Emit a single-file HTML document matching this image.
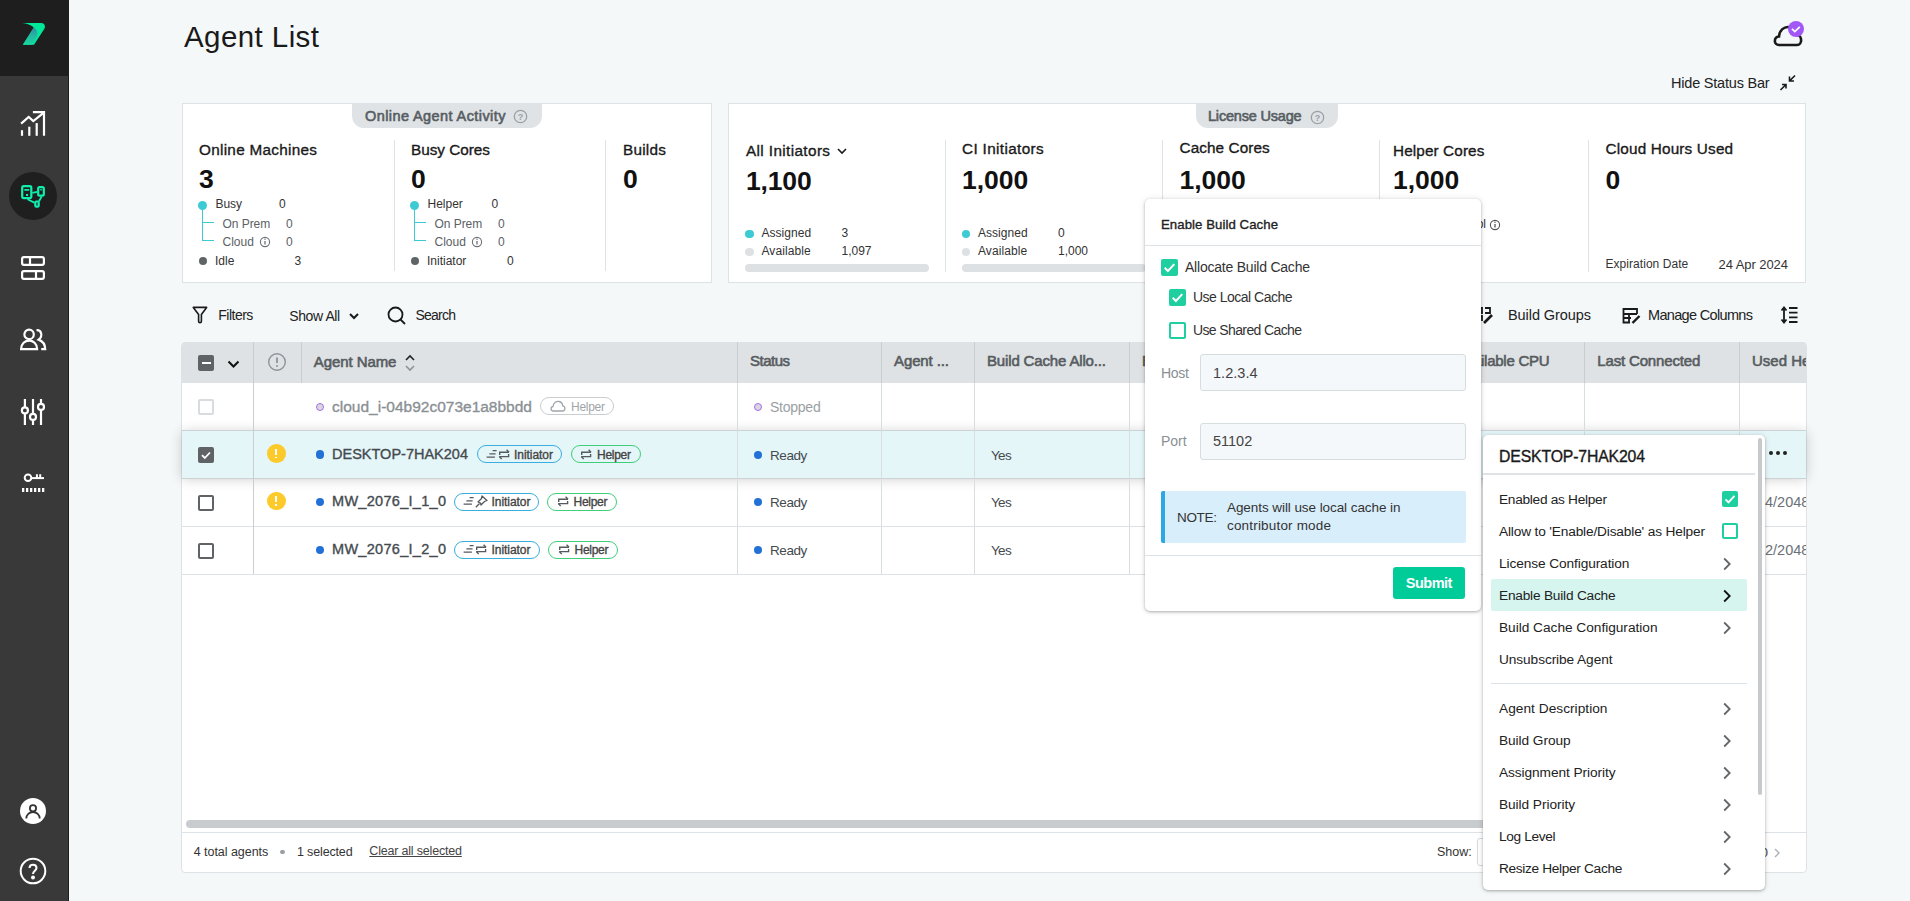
<!DOCTYPE html>
<html><head><meta charset="utf-8"><style>
html,body{margin:0;padding:0;}
body{width:1910px;height:901px;overflow:hidden;position:relative;background:#f4f8f9;font-family:"Liberation Sans",sans-serif;}
.t{position:absolute;white-space:nowrap;}
.r{position:absolute;}
svg.r{overflow:visible;}
</style></head><body>
<div class="r" style="left:0px;top:0px;width:68px;height:901px;background:#393939;"></div>
<div class="r" style="left:68px;top:0px;width:1px;height:901px;background:#1d1d1d;"></div>
<div class="r" style="left:0px;top:0px;width:68px;height:76px;background:#1e1e1e;"></div>
<svg class="r" style="left:0;top:0" width="68" height="76" viewBox="0 0 68 76">
<defs><linearGradient id="lg2" x1="0" y1="0" x2="0" y2="1"><stop offset="0" stop-color="#3a86a8"/><stop offset="0.45" stop-color="#24b4a2"/><stop offset="1" stop-color="#18d89e"/></linearGradient></defs>
<path d="M22.2,23 L41.5,23 Q45.8,23.6 44.7,28.3 L34,44.8 L22.9,44.8 L33.8,27.6 Q29.5,23.6 22.2,23 Z" fill="#00e89a"/>
<path d="M33.8,27.6 Q38.8,31.5 36.8,37 L32.2,44.8 L22.9,44.8 Z" fill="url(#lg2)"/>
</svg>
<svg class="r" style="left:18px;top:108px" width="30" height="30" viewBox="0 0 30 30" fill="none" stroke="#fff" stroke-width="2.2">
<path d="M3.1,15.6 L10.7,9 L15.3,13 L25.2,5.2"/><path d="M14.9,4.2 L26,4.2 L26,27.8"/>
<path d="M4,22.2 V27.8"/><path d="M11.3,18.7 V27.8"/><path d="M18.7,15.1 V27.8"/></svg>
<div class="r" style="left:9px;top:172px;width:48px;height:48px;background:#1f1f1f;border-radius:50%;"></div>
<svg class="r" style="left:19px;top:183px" width="28" height="28" viewBox="0 0 28 28" fill="none" stroke="#0ff0ae" stroke-width="2.2">
<rect x="3.2" y="3.2" width="9.1" height="12" rx="1.6"/><path d="M5.3,6.9 H10.2" stroke-width="1.7"/><rect x="7" y="11" width="2.1" height="2" fill="#0ff0ae" stroke="none"/>
<rect x="19.2" y="4.1" width="5.6" height="8.5" rx="1.4"/><path d="M21.3,6.8 H22.8" stroke-width="1.4"/><rect x="16.3" y="18.5" width="3.4" height="5.2" rx="1.1"/>
<path d="M13.3,9.8 L18.1,8.9" stroke-width="1.8"/><path d="M8.5,16.3 L15.3,19.6" stroke-width="1.8"/><path d="M22.6,13.6 L20,18.3" stroke-width="1.8"/></svg>
<svg class="r" style="left:19px;top:254px" width="28" height="28" viewBox="0 0 28 28" fill="none" stroke="#fff" stroke-width="2.2">
<rect x="3.1" y="3.1" width="21.8" height="7.7" rx="1.8"/><rect x="3.1" y="17.1" width="21.8" height="7.8" rx="1.8"/>
<path d="M11,3 V11"/><path d="M17,17 V25"/></svg>
<svg class="r" style="left:18px;top:326px" width="30" height="28" viewBox="0 0 30 28" fill="none" stroke="#fff" stroke-width="2.2">
<circle cx="11.1" cy="8.4" r="4.7"/><path d="M3.1,23.1 C3.1,11.8 19.1,11.8 19.1,23.1 Z"/>
<path d="M18.5,4.2 C23.5,3.8 25.2,10.2 20.6,13.6 C25,15.3 27.2,18.5 27.2,23.1 H23.2"/></svg>
<svg class="r" style="left:18px;top:397px" width="30" height="30" viewBox="0 0 30 30" fill="none" stroke="#fff" stroke-width="2.2">
<path d="M6.9,2 V10.4 M6.9,16.4 V28"/><circle cx="6.9" cy="13.4" r="3"/>
<path d="M15,2 V16.9 M15,22.9 V28"/><circle cx="15" cy="19.9" r="3"/>
<path d="M23,2 V6.9 M23,12.9 V28"/><circle cx="23" cy="9.9" r="3"/></svg>
<svg class="r" style="left:19px;top:471px" width="28" height="24" viewBox="0 0 28 24" fill="none" stroke="#fff" stroke-width="2.2">
<circle cx="9" cy="6.8" r="3.3" stroke-width="2"/><path d="M12.3,7.1 H25" stroke-width="2"/><path d="M17.9,3.2 V7 M21.2,3.2 V7" stroke-width="2"/>
<path d="M3,19 H25.5" stroke-dasharray="2.3 1.7" stroke-width="4"/></svg>
<div class="r" style="left:20px;top:798px;width:26px;height:26px;background:#fff;border-radius:50%;"></div>
<svg class="r" style="left:20px;top:798px" width="26" height="26" viewBox="0 0 26 26" fill="none" stroke="#333" stroke-width="1.8">
<circle cx="13" cy="10.2" r="3.1"/><path d="M6.3,20.6 A6.7,6.6 0 0 1 19.7,20.6"/></svg>
<svg class="r" style="left:19px;top:857px" width="28" height="28" viewBox="0 0 28 28" fill="none" stroke="#fff" stroke-width="2">
<circle cx="14" cy="14" r="12.3"/><path d="M10.5,11 C10.5,6.5 17.5,6.5 17.5,11 C17.5,13.5 14,14 14,17"/><circle cx="14" cy="20.5" r="1" fill="#fff"/></svg>
<div class="t" style="left:184.00px;top:22.03px;font-size:29.5px;line-height:29.5px;color:#1a1a1a;letter-spacing:0.422px;">Agent List</div>
<svg class="r" style="left:1770px;top:18px" width="40" height="32" viewBox="0 0 40 32" fill="none">
<path d="M9,27 C3.5,27 3.5,19 9,18.5 C9.5,12 14,8.5 19,9 C24,9.5 26.5,13 27,17 C32.5,17.5 32.5,27 27,27 Z" stroke="#1a1a1a" stroke-width="2.6"/>
<circle cx="26" cy="11" r="8" fill="#a258f6"/><path d="M22,10.8 L24.8,13.6 L29.8,8.8" stroke="#fff" stroke-width="1.7"/></svg>
<div class="t" style="left:1671.00px;top:75.73px;font-size:14.5px;line-height:14.5px;color:#222;letter-spacing:-0.204px;">Hide Status Bar</div>
<svg class="r" style="left:1778px;top:73px" width="20" height="20" viewBox="0 0 20 20" fill="none" stroke="#1a1a1a" stroke-width="1.6">
<path d="M17,2.5 L11.5,8 M11.5,3.5 V8 H16"/><path d="M2.5,17 L8,11.5 M4,11.5 H8 V15.5"/></svg>
<div class="r" style="left:182px;top:103px;width:530px;height:180px;background:#fff;border:1px solid #dde2e6;box-sizing:border-box;"></div>
<div class="r" style="left:352px;top:104px;width:189.5px;height:24px;background:#dfe3e6;border-radius:0 0 12px 12px;"></div>
<div class="t" style="left:365.00px;top:108.73px;font-size:14.5px;line-height:14.5px;color:#575d62;-webkit-text-stroke:0.6px #575d62;letter-spacing:0.411px;">Online Agent Activity</div>
<svg class="r" style="left:513.0px;top:109.0px" width="15.0" height="15.0" viewBox="0 0 15.0 15.0" fill="none" stroke="#9aa0a4" stroke-width="1.3">
<circle cx="7.5" cy="7.5" r="6.2"/><text x="7.5" y="10.8" font-family="Liberation Sans" font-size="9" font-weight="700" fill="#9aa0a4" stroke="none" text-anchor="middle">?</text></svg>
<div class="t" style="left:199.00px;top:142.05px;font-size:15.3px;line-height:15.3px;color:#1a1a1a;-webkit-text-stroke:0.35px #1a1a1a;letter-spacing:0.290px;">Online Machines</div>
<div class="t" style="left:199.00px;top:165.57px;font-size:26.5px;line-height:26.5px;color:#111;font-weight:700;">3</div>
<div class="r" style="left:198.0px;top:200.5px;width:9px;height:9px;background:#3ccbd3;border-radius:50%;"></div>
<div class="r" style="left:201.75px;top:205px;width:1.5px;height:36px;background:#3ccbd3;"></div>
<div class="r" style="left:201.75px;top:221.7px;width:12px;height:1.5px;background:#3ccbd3;"></div>
<div class="r" style="left:201.75px;top:239.5px;width:12px;height:1.5px;background:#3ccbd3;"></div>
<div class="t" style="left:215.50px;top:197.84px;font-size:12px;line-height:12px;color:#333;letter-spacing:-0.096px;">Busy</div>
<div class="t" style="left:279.00px;top:197.84px;font-size:12px;line-height:12px;color:#333;">0</div>
<div class="t" style="left:222.50px;top:217.54px;font-size:12px;line-height:12px;color:#5b6166;letter-spacing:-0.053px;">On Prem</div>
<div class="t" style="left:286.00px;top:217.84px;font-size:12px;line-height:12px;color:#5b6166;">0</div>
<div class="t" style="left:222.50px;top:235.54px;font-size:12px;line-height:12px;color:#5b6166;">Cloud</div>
<svg class="r" style="left:258.5px;top:236px" width="12" height="12" viewBox="0 0 12 12" fill="none" stroke="#6b7176" stroke-width="1.1">
<circle cx="6" cy="6" r="4.6"/><path d="M6,5 V8.5" stroke-width="1.3"/><circle cx="6" cy="3.3" r="0.7" fill="#6b7176" stroke="none"/></svg>
<div class="t" style="left:286.00px;top:235.84px;font-size:12px;line-height:12px;color:#5b6166;">0</div>
<div class="r" style="left:198.5px;top:257px;width:8px;height:8px;background:#5f6466;border-radius:50%;"></div>
<div class="t" style="left:215.00px;top:254.84px;font-size:12px;line-height:12px;color:#333;">Idle</div>
<div class="t" style="left:294.50px;top:254.84px;font-size:12px;line-height:12px;color:#333;">3</div>
<div class="r" style="left:394px;top:140px;width:1px;height:131px;background:#dde2e6;"></div>
<div class="t" style="left:411.00px;top:142.05px;font-size:15.3px;line-height:15.3px;color:#1a1a1a;-webkit-text-stroke:0.35px #1a1a1a;letter-spacing:-0.007px;">Busy Cores</div>
<div class="t" style="left:411.00px;top:165.57px;font-size:26.5px;line-height:26.5px;color:#111;font-weight:700;">0</div>
<div class="r" style="left:410.0px;top:200.5px;width:9px;height:9px;background:#3ccbd3;border-radius:50%;"></div>
<div class="r" style="left:413.75px;top:205px;width:1.5px;height:36px;background:#3ccbd3;"></div>
<div class="r" style="left:413.75px;top:221.7px;width:12px;height:1.5px;background:#3ccbd3;"></div>
<div class="r" style="left:413.75px;top:239.5px;width:12px;height:1.5px;background:#3ccbd3;"></div>
<div class="t" style="left:427.50px;top:197.84px;font-size:12px;line-height:12px;color:#333;">Helper</div>
<div class="t" style="left:491.50px;top:197.84px;font-size:12px;line-height:12px;color:#333;">0</div>
<div class="t" style="left:434.50px;top:217.54px;font-size:12px;line-height:12px;color:#5b6166;letter-spacing:-0.053px;">On Prem</div>
<div class="t" style="left:498.00px;top:217.84px;font-size:12px;line-height:12px;color:#5b6166;">0</div>
<div class="t" style="left:434.50px;top:235.54px;font-size:12px;line-height:12px;color:#5b6166;">Cloud</div>
<svg class="r" style="left:470.5px;top:236px" width="12" height="12" viewBox="0 0 12 12" fill="none" stroke="#6b7176" stroke-width="1.1">
<circle cx="6" cy="6" r="4.6"/><path d="M6,5 V8.5" stroke-width="1.3"/><circle cx="6" cy="3.3" r="0.7" fill="#6b7176" stroke="none"/></svg>
<div class="t" style="left:498.00px;top:235.84px;font-size:12px;line-height:12px;color:#5b6166;">0</div>
<div class="r" style="left:410.5px;top:257px;width:8px;height:8px;background:#5f6466;border-radius:50%;"></div>
<div class="t" style="left:427.00px;top:254.84px;font-size:12px;line-height:12px;color:#333;">Initiator</div>
<div class="t" style="left:507.00px;top:254.84px;font-size:12px;line-height:12px;color:#333;">0</div>
<div class="r" style="left:605px;top:140px;width:1px;height:131px;background:#dde2e6;"></div>
<div class="t" style="left:623.00px;top:142.05px;font-size:15.3px;line-height:15.3px;color:#1a1a1a;-webkit-text-stroke:0.35px #1a1a1a;letter-spacing:0.226px;">Builds</div>
<div class="t" style="left:623.00px;top:165.57px;font-size:26.5px;line-height:26.5px;color:#111;font-weight:700;">0</div>
<div class="r" style="left:728px;top:103px;width:1078px;height:180px;background:#fff;border:1px solid #dde2e6;box-sizing:border-box;"></div>
<div class="r" style="left:1196px;top:104px;width:142px;height:23.5px;background:#dfe3e6;border-radius:0 0 12px 12px;"></div>
<div class="t" style="left:1208.00px;top:108.73px;font-size:14.5px;line-height:14.5px;color:#575d62;-webkit-text-stroke:0.6px #575d62;letter-spacing:-0.193px;">License Usage</div>
<svg class="r" style="left:1309.5px;top:109.5px" width="15.0" height="15.0" viewBox="0 0 15.0 15.0" fill="none" stroke="#9aa0a4" stroke-width="1.3">
<circle cx="7.5" cy="7.5" r="6.2"/><text x="7.5" y="10.8" font-family="Liberation Sans" font-size="9" font-weight="700" fill="#9aa0a4" stroke="none" text-anchor="middle">?</text></svg>
<div class="t" style="left:746.00px;top:143.05px;font-size:15.3px;line-height:15.3px;color:#1a1a1a;-webkit-text-stroke:0.35px #1a1a1a;letter-spacing:0.380px;">All Initiators</div>
<svg class="r" style="left:836px;top:146px" width="12" height="10" viewBox="0 0 12 10" fill="none" stroke="#1a1a1a" stroke-width="1.6"><path d="M2,3 L6,7 L10,3"/></svg>
<div class="t" style="left:746.00px;top:167.57px;font-size:26.5px;line-height:26.5px;color:#111;font-weight:700;letter-spacing:-0.157px;">1,100</div>
<div class="r" style="left:745.0px;top:229.5px;width:8.5px;height:8.5px;background:#3ccbd3;border-radius:50%;"></div>
<div class="t" style="left:761.50px;top:226.84px;font-size:12px;line-height:12px;color:#333;letter-spacing:0.032px;">Assigned</div>
<div class="t" style="left:841.50px;top:226.84px;font-size:12px;line-height:12px;color:#333;">3</div>
<div class="r" style="left:745.0px;top:247.5px;width:8.5px;height:8.5px;background:#dde1e4;border-radius:50%;"></div>
<div class="t" style="left:761.50px;top:244.84px;font-size:12px;line-height:12px;color:#333;letter-spacing:0.077px;">Available</div>
<div class="t" style="left:841.50px;top:244.84px;font-size:12px;line-height:12px;color:#333;">1,097</div>
<div class="r" style="left:745.0px;top:264px;width:184px;height:8px;background:#dde1e4;border-radius:4px;"></div>
<div class="r" style="left:945px;top:140px;width:1px;height:132px;background:#dde2e6;"></div>
<div class="t" style="left:962.00px;top:140.55px;font-size:15.3px;line-height:15.3px;color:#1a1a1a;-webkit-text-stroke:0.35px #1a1a1a;letter-spacing:0.353px;">CI Initiators</div>
<div class="t" style="left:962.00px;top:166.57px;font-size:26.5px;line-height:26.5px;color:#111;font-weight:700;">1,000</div>
<div class="r" style="left:961.5px;top:229.5px;width:8.5px;height:8.5px;background:#3ccbd3;border-radius:50%;"></div>
<div class="t" style="left:978.00px;top:226.84px;font-size:12px;line-height:12px;color:#333;letter-spacing:0.032px;">Assigned</div>
<div class="t" style="left:1058.00px;top:226.84px;font-size:12px;line-height:12px;color:#333;">0</div>
<div class="r" style="left:961.5px;top:247.5px;width:8.5px;height:8.5px;background:#dde1e4;border-radius:50%;"></div>
<div class="t" style="left:978.00px;top:244.84px;font-size:12px;line-height:12px;color:#333;letter-spacing:0.077px;">Available</div>
<div class="t" style="left:1058.00px;top:244.84px;font-size:12px;line-height:12px;color:#333;">1,000</div>
<div class="r" style="left:961.5px;top:264px;width:184px;height:8px;background:#dde1e4;border-radius:4px;"></div>
<div class="r" style="left:1162px;top:140px;width:1px;height:132px;background:#dde2e6;"></div>
<div class="t" style="left:1179.50px;top:140.05px;font-size:15.3px;line-height:15.3px;color:#1a1a1a;-webkit-text-stroke:0.35px #1a1a1a;letter-spacing:0.092px;">Cache Cores</div>
<div class="t" style="left:1179.50px;top:166.57px;font-size:26.5px;line-height:26.5px;color:#111;font-weight:700;">1,000</div>
<div class="r" style="left:1379px;top:140px;width:1px;height:132px;background:#dde2e6;"></div>
<div class="t" style="left:1393.00px;top:143.05px;font-size:15.3px;line-height:15.3px;color:#1a1a1a;-webkit-text-stroke:0.35px #1a1a1a;letter-spacing:0.116px;">Helper Cores</div>
<div class="t" style="left:1393.00px;top:166.57px;font-size:26.5px;line-height:26.5px;color:#111;font-weight:700;">1,000</div>
<div class="t" style="left:1423.30px;top:217.84px;font-size:12px;line-height:12px;color:#333;">Helper Pool</div>
<svg class="r" style="left:1488.5px;top:218.5px" width="12" height="12" viewBox="0 0 12 12" fill="none" stroke="#555" stroke-width="1.1">
<circle cx="6" cy="6" r="4.6"/><path d="M6,5 V8.5" stroke-width="1.3"/><circle cx="6" cy="3.3" r="0.7" fill="#555" stroke="none"/></svg>
<div class="r" style="left:1588px;top:140px;width:1px;height:132px;background:#dde2e6;"></div>
<div class="t" style="left:1605.50px;top:140.55px;font-size:15.3px;line-height:15.3px;color:#1a1a1a;-webkit-text-stroke:0.35px #1a1a1a;letter-spacing:0.174px;">Cloud Hours Used</div>
<div class="t" style="left:1605.50px;top:166.57px;font-size:26.5px;line-height:26.5px;color:#111;font-weight:700;">0</div>
<div class="t" style="left:1605.50px;top:257.84px;font-size:12px;line-height:12px;color:#333;letter-spacing:0.047px;">Expiration Date</div>
<div class="t" style="left:1718.50px;top:257.50px;font-size:13px;line-height:13px;color:#333;letter-spacing:-0.062px;">24 Apr 2024</div>
<svg class="r" style="left:189px;top:304px" width="22" height="22" viewBox="0 0 22 22" fill="none" stroke="#1a1a1a" stroke-width="1.6" stroke-linejoin="round">
<path d="M4.3,3.4 H17.6 L12.4,10.4 V17.2 Q12.4,18.6 11,18.6 Q9.6,18.6 9.6,17.2 V10.4 Z"/></svg>
<div class="t" style="left:218.30px;top:308.15px;font-size:14px;line-height:14px;color:#222;letter-spacing:-0.521px;">Filters</div>
<div class="t" style="left:289.20px;top:308.65px;font-size:14px;line-height:14px;color:#222;letter-spacing:-0.386px;">Show All</div>
<svg class="r" style="left:347px;top:310.5px" width="14" height="12" viewBox="0 0 14 12" fill="none" stroke="#1a1a1a" stroke-width="2"><path d="M3,3 L7,7 L11,3"/></svg>
<svg class="r" style="left:386px;top:304.5px" width="22" height="22" viewBox="0 0 22 22" fill="none" stroke="#1a1a1a" stroke-width="1.8">
<circle cx="9.5" cy="9.5" r="7"/><path d="M14.5,14.5 L19,19"/></svg>
<div class="t" style="left:415.40px;top:308.15px;font-size:14px;line-height:14px;color:#222;letter-spacing:-0.752px;">Search</div>
<svg class="r" style="left:1474px;top:304px" width="24" height="24" viewBox="0 0 24 24" fill="none" stroke="#1a1a1a" stroke-width="1.8">
<path d="M3,4 H8 V9 H3 Z M11,4 H16 V9 H11 M3,12 H8 V17"/><path d="M18,11 L10,19" stroke-width="2.6"/></svg>
<div class="t" style="left:1508.00px;top:307.73px;font-size:14.5px;line-height:14.5px;color:#222;letter-spacing:-0.075px;">Build Groups</div>
<svg class="r" style="left:1620px;top:305px" width="22" height="22" viewBox="0 0 22 22" fill="none" stroke="#1a1a1a" stroke-width="1.8">
<path d="M10,17.5 H3.5 V4 H17 V9"/><path d="M3.5,9 H17 M3.5,13 H11 M9,9 V17"/><path d="M19.5,11 L12.5,18" stroke-width="2.4"/></svg>
<div class="t" style="left:1648.00px;top:307.73px;font-size:14.5px;line-height:14.5px;color:#222;letter-spacing:-0.666px;">Manage Columns</div>
<svg class="r" style="left:1779px;top:305px" width="22" height="20" viewBox="0 0 22 20" fill="none" stroke="#1a1a1a" stroke-width="1.8">
<path d="M5,3 V17 M2.5,5.5 L5,2.5 L7.5,5.5 M2.5,14.5 L5,17.5 L7.5,14.5"/><path d="M10,3 H18.5 M10,7.7 H18.5 M10,12.3 H18.5 M10,17 H18.5"/></svg>
<div class="r" style="left:181px;top:342px;width:1626px;height:531px;background:#fff;border:1px solid #dde2e6;border-radius:4px;box-sizing:border-box;"></div>
<div class="r" style="left:182px;top:342px;width:1624px;height:41px;background:#dee2e5;border-radius:4px 4px 0 0;"></div>
<div class="r" style="left:182px;top:430.5px;width:1624px;height:47.5px;background:#e5f6f9;box-shadow:0 1px 12px rgba(0,0,0,0.2);"></div>
<div class="r" style="left:182px;top:430px;width:1624px;height:1px;background:#cdd2d5;"></div>
<div class="r" style="left:182px;top:477.5px;width:1624px;height:1px;background:#cdd2d5;"></div>
<div class="r" style="left:182px;top:525.5px;width:1624px;height:1px;background:#dde2e6;"></div>
<div class="r" style="left:182px;top:574px;width:1624px;height:1px;background:#dde2e6;"></div>
<div class="r" style="left:253px;top:342px;width:1px;height:41px;background:#c8cdd0;"></div>
<div class="r" style="left:301px;top:342px;width:1px;height:41px;background:#c8cdd0;"></div>
<div class="r" style="left:737px;top:342px;width:1px;height:41px;background:#c8cdd0;"></div>
<div class="r" style="left:881px;top:342px;width:1px;height:41px;background:#c8cdd0;"></div>
<div class="r" style="left:974px;top:342px;width:1px;height:41px;background:#c8cdd0;"></div>
<div class="r" style="left:1129px;top:342px;width:1px;height:41px;background:#c8cdd0;"></div>
<div class="r" style="left:1584px;top:342px;width:1px;height:41px;background:#c8cdd0;"></div>
<div class="r" style="left:1739px;top:342px;width:1px;height:41px;background:#c8cdd0;"></div>
<div class="r" style="left:253px;top:383px;width:1px;height:191px;background:#c9ced1;"></div>
<div class="r" style="left:737px;top:383px;width:1px;height:191px;background:#d8dde0;"></div>
<div class="r" style="left:881px;top:383px;width:1px;height:191px;background:#d8dde0;"></div>
<div class="r" style="left:974px;top:383px;width:1px;height:191px;background:#d8dde0;"></div>
<div class="r" style="left:1129px;top:383px;width:1px;height:191px;background:#d8dde0;"></div>
<div class="r" style="left:1584px;top:383px;width:1px;height:191px;background:#d8dde0;"></div>
<div class="r" style="left:1739px;top:383px;width:1px;height:191px;background:#d8dde0;"></div>
<div class="r" style="left:198px;top:355px;width:16px;height:16px;background:#5f6366;border-radius:2px;"></div>
<div class="r" style="left:201.5px;top:362px;width:9px;height:2.2px;background:#fff;"></div>
<svg class="r" style="left:226px;top:358px" width="15" height="12" viewBox="0 0 15 12" fill="none" stroke="#111" stroke-width="2"><path d="M2.5,3.5 L7.5,8.5 L12.5,3.5"/></svg>
<svg class="r" style="left:267px;top:352px" width="20" height="20" viewBox="0 0 20 20" fill="none" stroke="#8e9397" stroke-width="1.4">
<circle cx="10" cy="10" r="8.3"/><path d="M10,5.5 V11" stroke-width="1.8"/><circle cx="10" cy="14" r="1" fill="#8e9397" stroke="none"/></svg>
<div class="t" style="left:313.80px;top:353.80px;font-size:15px;line-height:15px;color:#575c60;-webkit-text-stroke:0.6px #575c60;letter-spacing:-0.088px;">Agent Name</div>
<svg class="r" style="left:403px;top:353px" width="14" height="20" viewBox="0 0 14 20" fill="none" stroke-width="1.6">
<path d="M3,7 L7,3 L11,7" stroke="#222"/><path d="M3,13 L7,17 L11,13" stroke="#8e9397"/></svg>
<div class="t" style="left:750.00px;top:353.30px;font-size:15px;line-height:15px;color:#575c60;-webkit-text-stroke:0.6px #575c60;letter-spacing:-0.506px;">Status</div>
<div class="t" style="left:894.00px;top:353.30px;font-size:15px;line-height:15px;color:#575c60;-webkit-text-stroke:0.6px #575c60;letter-spacing:-0.109px;">Agent ...</div>
<div class="t" style="left:987.00px;top:353.30px;font-size:15px;line-height:15px;color:#575c60;-webkit-text-stroke:0.6px #575c60;letter-spacing:-0.153px;">Build Cache Allo...</div>
<div class="t" style="left:1142.00px;top:353.30px;font-size:15px;line-height:15px;color:#575c60;-webkit-text-stroke:0.6px #575c60;">Build Cache Size</div>
<div class="t" style="left:1456.10px;top:353.30px;font-size:15px;line-height:15px;color:#575c60;-webkit-text-stroke:0.6px #575c60;letter-spacing:-0.238px;">Available CPU</div>
<div class="t" style="left:1597.30px;top:353.30px;font-size:15px;line-height:15px;color:#575c60;-webkit-text-stroke:0.6px #575c60;letter-spacing:-0.160px;">Last Connected</div>
<div class="r" style="left:1740px;top:342px;width:66px;height:41px;overflow:hidden">
<div class="t" style="left:12.00px;top:11.30px;font-size:15px;line-height:15px;color:#575c60;-webkit-text-stroke:0.6px #575c60;">Used Helper Cores</div>
</div>
<div class="r" style="left:198px;top:399px;width:16px;height:16px;border:2px solid #d8dcdf;border-radius:2px;box-sizing:border-box;"></div>
<div class="r" style="left:316px;top:403px;width:8px;height:8px;background:#d9d9dc;border:1.3px solid #a66cf0;border-radius:50%;box-sizing:border-box;"></div>
<div class="t" style="left:332.00px;top:398.88px;font-size:15.5px;line-height:15.5px;color:#8a9094;-webkit-text-stroke:0.35px #8a9094;letter-spacing:0.001px;">cloud_i-04b92c073e1a8bbdd</div>
<div class="r" style="left:540px;top:397px;width:73.5px;height:18px;border:1px solid #c9cdd0;border-radius:9px;box-sizing:border-box;"></div>
<svg class="r" style="left:549px;top:399px" width="18" height="14" viewBox="0 0 18 14" fill="none" stroke="#a0a5a9" stroke-width="1.3">
<path d="M4.5,12 C1.5,12 1.2,8 4,7.5 C4.5,3.5 7.5,2 10,2.5 C12.5,3 13.5,5 13.7,6.8 C16.5,7 16.8,12 13.5,12 Z"/></svg>
<div class="t" style="left:571.00px;top:401.34px;font-size:12px;line-height:12px;color:#a0a5a9;letter-spacing:-0.272px;">Helper</div>
<div class="r" style="left:754px;top:403px;width:8px;height:8px;background:#d9d9dc;border:1.3px solid #a66cf0;border-radius:50%;box-sizing:border-box;"></div>
<div class="t" style="left:770.00px;top:400.15px;font-size:14px;line-height:14px;color:#9aa0a4;letter-spacing:-0.245px;">Stopped</div>
<div class="r" style="left:198px;top:446.5px;width:16px;height:16px;background:#5f6366;border-radius:2px;"></div>
<svg class="r" style="left:198px;top:446.5px" width="16" height="16" viewBox="0 0 16 16" fill="none" stroke="#fff" stroke-width="1.8"><path d="M4,8.2 L6.8,11 L12,5.5"/></svg>
<div class="r" style="left:267px;top:444.3px;width:18.5px;height:18.5px;background:#fdca2c;border-radius:50%;"></div>
<div class="r" style="left:275.4px;top:448.7px;width:1.6px;height:6.2px;background:#fff;"></div>
<div class="r" style="left:275.4px;top:456.7px;width:1.6px;height:1.6px;background:#fff;"></div>
<div class="r" style="left:315.8px;top:450.3px;width:8.4px;height:8.4px;background:#2271d6;border-radius:50%;"></div>
<div class="t" style="left:332.00px;top:446.73px;font-size:14.5px;line-height:14.5px;color:#444a4e;-webkit-text-stroke:0.35px #444a4e;letter-spacing:0.004px;">DESKTOP-7HAK204</div>
<div class="r" style="left:476.5px;top:445.0px;width:85.5px;height:18px;border:1px solid #3aaee0;border-radius:9px;box-sizing:border-box;"></div>
<svg class="r" style="left:486.5px;top:447.7px" width="12" height="10" viewBox="0 0 12 10" fill="none" stroke="#555a5e" stroke-width="1.25">
<path d="M5.6,2.5 H9.6 M2.4,5.8 H8.6 M-0.4,9.1 H7.9"/></svg>
<svg class="r" style="left:498.5px;top:448.5px" width="11" height="11" viewBox="0 0 11 11" fill="none" stroke="#555a5e" stroke-width="1.4">
<path d="M0.7,6 V3.3 H10"/><path d="M7.6,0.8 L10,3.3"/><path d="M9.6,5 V7.6 H0.3"/><path d="M2.7,10.1 L0.3,7.6"/></svg>
<div class="t" style="left:514.00px;top:448.84px;font-size:12px;line-height:12px;color:#444;-webkit-text-stroke:0.35px #444;letter-spacing:-0.045px;">Initiator</div>
<div class="r" style="left:570.5px;top:445.0px;width:70px;height:18px;border:1px solid #3fcf7b;border-radius:9px;box-sizing:border-box;"></div>
<svg class="r" style="left:581.0px;top:448.5px" width="11" height="11" viewBox="0 0 11 11" fill="none" stroke="#555a5e" stroke-width="1.4">
<path d="M0.7,6 V3.3 H10"/><path d="M7.6,0.8 L10,3.3"/><path d="M9.6,5 V7.6 H0.3"/><path d="M2.7,10.1 L0.3,7.6"/></svg>
<div class="t" style="left:597.00px;top:448.84px;font-size:12px;line-height:12px;color:#444;-webkit-text-stroke:0.35px #444;letter-spacing:-0.272px;">Helper</div>
<div class="r" style="left:754px;top:450.5px;width:8px;height:8px;background:#2271d6;border-radius:50%;"></div>
<div class="t" style="left:770.00px;top:448.57px;font-size:13.5px;line-height:13.5px;color:#444a4e;letter-spacing:-0.433px;">Ready</div>
<div class="t" style="left:991.00px;top:448.57px;font-size:13.5px;line-height:13.5px;color:#444a4e;letter-spacing:-0.666px;">Yes</div>
<svg class="r" style="left:1768px;top:448px" width="20" height="10" viewBox="0 0 20 10"><circle cx="3" cy="5" r="2" fill="#222"/><circle cx="10" cy="5" r="2" fill="#222"/><circle cx="17" cy="5" r="2" fill="#222"/></svg>
<div class="r" style="left:198px;top:494.5px;width:16px;height:16px;border:2px solid #5f6366;border-radius:2px;box-sizing:border-box;"></div>
<div class="r" style="left:267px;top:491.8px;width:18.5px;height:18.5px;background:#fdca2c;border-radius:50%;"></div>
<div class="r" style="left:275.4px;top:496.2px;width:1.6px;height:6.2px;background:#fff;"></div>
<div class="r" style="left:275.4px;top:504.2px;width:1.6px;height:1.6px;background:#fff;"></div>
<div class="r" style="left:315.8px;top:497.8px;width:8.4px;height:8.4px;background:#2271d6;border-radius:50%;"></div>
<div class="t" style="left:332.00px;top:494.23px;font-size:14.5px;line-height:14.5px;color:#444a4e;-webkit-text-stroke:0.35px #444a4e;letter-spacing:0.297px;">MW_2076_I_1_0</div>
<div class="r" style="left:454px;top:492.5px;width:84.5px;height:18px;border:1px solid #3aaee0;border-radius:9px;box-sizing:border-box;"></div>
<svg class="r" style="left:464px;top:495.2px" width="12" height="10" viewBox="0 0 12 10" fill="none" stroke="#555a5e" stroke-width="1.25">
<path d="M5.6,2.5 H9.6 M2.4,5.8 H8.6 M-0.4,9.1 H7.9"/></svg>
<svg class="r" style="left:474.5px;top:495px" width="13" height="13" viewBox="0 0 13 13" fill="none" stroke="#555a5e" stroke-width="1.3" stroke-linejoin="round">
<path d="M7,1 L12,5.5 L9.5,6.5 L6,10 L5.5,8 L3,7 L6.5,3.5 Z"/><path d="M0.8,12.2 L4.5,8.5"/></svg>
<div class="t" style="left:491.50px;top:496.34px;font-size:12px;line-height:12px;color:#444;-webkit-text-stroke:0.35px #444;letter-spacing:-0.045px;">Initiator</div>
<div class="r" style="left:547.0px;top:492.5px;width:70px;height:18px;border:1px solid #3fcf7b;border-radius:9px;box-sizing:border-box;"></div>
<svg class="r" style="left:557.5px;top:496px" width="11" height="11" viewBox="0 0 11 11" fill="none" stroke="#555a5e" stroke-width="1.4">
<path d="M0.7,6 V3.3 H10"/><path d="M7.6,0.8 L10,3.3"/><path d="M9.6,5 V7.6 H0.3"/><path d="M2.7,10.1 L0.3,7.6"/></svg>
<div class="t" style="left:573.50px;top:496.34px;font-size:12px;line-height:12px;color:#444;-webkit-text-stroke:0.35px #444;letter-spacing:-0.272px;">Helper</div>
<div class="r" style="left:754px;top:498px;width:8px;height:8px;background:#2271d6;border-radius:50%;"></div>
<div class="t" style="left:770.00px;top:496.07px;font-size:13.5px;line-height:13.5px;color:#444a4e;letter-spacing:-0.433px;">Ready</div>
<div class="t" style="left:991.00px;top:496.07px;font-size:13.5px;line-height:13.5px;color:#444a4e;letter-spacing:-0.666px;">Yes</div>
<div class="r" style="left:1740px;top:478px;width:66px;height:47px;overflow:hidden">
<div class="t" style="left:25.00px;top:17.23px;font-size:14.5px;line-height:14.5px;color:#6b7176;">4/2048</div>
</div>
<div class="r" style="left:198px;top:542.5px;width:16px;height:16px;border:2px solid #5f6366;border-radius:2px;box-sizing:border-box;"></div>
<div class="r" style="left:315.8px;top:545.8px;width:8.4px;height:8.4px;background:#2271d6;border-radius:50%;"></div>
<div class="t" style="left:332.00px;top:542.23px;font-size:14.5px;line-height:14.5px;color:#444a4e;-webkit-text-stroke:0.35px #444a4e;letter-spacing:0.297px;">MW_2076_I_2_0</div>
<div class="r" style="left:454px;top:540.5px;width:85.5px;height:18px;border:1px solid #3aaee0;border-radius:9px;box-sizing:border-box;"></div>
<svg class="r" style="left:464px;top:543.2px" width="12" height="10" viewBox="0 0 12 10" fill="none" stroke="#555a5e" stroke-width="1.25">
<path d="M5.6,2.5 H9.6 M2.4,5.8 H8.6 M-0.4,9.1 H7.9"/></svg>
<svg class="r" style="left:476px;top:544px" width="11" height="11" viewBox="0 0 11 11" fill="none" stroke="#555a5e" stroke-width="1.4">
<path d="M0.7,6 V3.3 H10"/><path d="M7.6,0.8 L10,3.3"/><path d="M9.6,5 V7.6 H0.3"/><path d="M2.7,10.1 L0.3,7.6"/></svg>
<div class="t" style="left:491.50px;top:544.34px;font-size:12px;line-height:12px;color:#444;-webkit-text-stroke:0.35px #444;letter-spacing:-0.045px;">Initiator</div>
<div class="r" style="left:548.0px;top:540.5px;width:70px;height:18px;border:1px solid #3fcf7b;border-radius:9px;box-sizing:border-box;"></div>
<svg class="r" style="left:558.5px;top:544px" width="11" height="11" viewBox="0 0 11 11" fill="none" stroke="#555a5e" stroke-width="1.4">
<path d="M0.7,6 V3.3 H10"/><path d="M7.6,0.8 L10,3.3"/><path d="M9.6,5 V7.6 H0.3"/><path d="M2.7,10.1 L0.3,7.6"/></svg>
<div class="t" style="left:574.50px;top:544.34px;font-size:12px;line-height:12px;color:#444;-webkit-text-stroke:0.35px #444;letter-spacing:-0.272px;">Helper</div>
<div class="r" style="left:754px;top:546px;width:8px;height:8px;background:#2271d6;border-radius:50%;"></div>
<div class="t" style="left:770.00px;top:544.07px;font-size:13.5px;line-height:13.5px;color:#444a4e;letter-spacing:-0.433px;">Ready</div>
<div class="t" style="left:991.00px;top:544.07px;font-size:13.5px;line-height:13.5px;color:#444a4e;letter-spacing:-0.666px;">Yes</div>
<div class="r" style="left:1740px;top:526px;width:66px;height:47px;overflow:hidden">
<div class="t" style="left:25.00px;top:17.23px;font-size:14.5px;line-height:14.5px;color:#6b7176;">2/2048</div>
</div>
<div class="r" style="left:186px;top:820px;width:1570px;height:8px;background:#c9cccf;border-radius:4px;"></div>
<div class="r" style="left:182px;top:832px;width:1624px;height:1px;background:#dde2e6;"></div>
<div class="t" style="left:193.70px;top:845.92px;font-size:12.5px;line-height:12.5px;color:#333;letter-spacing:-0.036px;">4 total agents</div>
<div class="r" style="left:280px;top:849.5px;width:4.5px;height:4.5px;background:#9aa0a4;border-radius:50%;"></div>
<div class="t" style="left:297.00px;top:845.92px;font-size:12.5px;line-height:12.5px;color:#333;letter-spacing:-0.154px;">1 selected</div>
<div class="t" style="left:369.30px;top:845.42px;font-size:12.5px;line-height:12.5px;color:#444;letter-spacing:-0.188px;text-decoration:underline;">Clear all selected</div>
<div class="t" style="left:1437.00px;top:845.92px;font-size:12.5px;line-height:12.5px;color:#333;">Show:</div>
<div class="r" style="left:1477px;top:838px;width:60px;height:28px;border:1px solid #d5dadd;border-radius:3px;box-sizing:border-box;background:#fff;"></div>
<div class="t" style="left:1735.47px;top:846.00px;font-size:13px;line-height:13px;color:#444;">1 / 10</div>
<svg class="r" style="left:1770px;top:846px" width="14" height="14" viewBox="0 0 14 14" fill="none" stroke="#aab0b4" stroke-width="1.4"><path d="M5,3 L9,7 L5,11"/></svg>
<div class="r" style="left:1145px;top:199px;width:336px;height:412px;background:#fff;border-radius:5px;box-shadow:0 1px 3px rgba(0,0,0,0.28),0 0 7px rgba(0,0,0,0.1);"></div>
<div class="t" style="left:1161.00px;top:217.83px;font-size:13.2px;line-height:13.2px;color:#222;-webkit-text-stroke:0.35px #222;letter-spacing:0.068px;">Enable Build Cache</div>
<div class="r" style="left:1145px;top:244.5px;width:336px;height:1px;background:#dde2e6;"></div>
<div class="r" style="left:1161px;top:259px;width:17px;height:17px;background:#1fcf9f;border-radius:2px;"></div>
<svg class="r" style="left:1161px;top:259px" width="17" height="17" viewBox="0 0 16 16" fill="none" stroke="#fff" stroke-width="1.9"><path d="M3.5,8.3 L6.5,11.3 L12.5,4.8"/></svg>
<div class="t" style="left:1185.00px;top:260.15px;font-size:14px;line-height:14px;color:#333;letter-spacing:-0.220px;">Allocate Build Cache</div>
<div class="r" style="left:1169px;top:289px;width:17px;height:17px;background:#1fcf9f;border-radius:2px;"></div>
<svg class="r" style="left:1169px;top:289px" width="17" height="17" viewBox="0 0 16 16" fill="none" stroke="#fff" stroke-width="1.9"><path d="M3.5,8.3 L6.5,11.3 L12.5,4.8"/></svg>
<div class="t" style="left:1193.00px;top:289.75px;font-size:14px;line-height:14px;color:#333;letter-spacing:-0.509px;">Use Local Cache</div>
<div class="r" style="left:1169px;top:322px;width:17px;height:17px;border:2px solid #1fcf9f;border-radius:2px;box-sizing:border-box;"></div>
<div class="t" style="left:1193.00px;top:322.75px;font-size:14px;line-height:14px;color:#333;letter-spacing:-0.620px;">Use Shared Cache</div>
<div class="t" style="left:1161.00px;top:366.15px;font-size:14px;line-height:14px;color:#8a9094;letter-spacing:-0.332px;">Host</div>
<div class="r" style="left:1200px;top:354px;width:266px;height:37px;background:#f5f8fa;border:1px solid #d7dcdf;border-radius:3px;box-sizing:border-box;"></div>
<div class="t" style="left:1213.00px;top:365.73px;font-size:14.5px;line-height:14.5px;color:#444;letter-spacing:0.026px;">1.2.3.4</div>
<div class="t" style="left:1161.00px;top:434.15px;font-size:14px;line-height:14px;color:#8a9094;">Port</div>
<div class="r" style="left:1200px;top:422.5px;width:266px;height:37px;background:#f5f8fa;border:1px solid #d7dcdf;border-radius:3px;box-sizing:border-box;"></div>
<div class="t" style="left:1213.00px;top:433.73px;font-size:14.5px;line-height:14.5px;color:#444;">51102</div>
<div class="r" style="left:1161px;top:491px;width:305px;height:52px;background:#d9eefb;border-radius:2px;"></div>
<div class="r" style="left:1161px;top:491px;width:4px;height:52px;background:#2ea8e5;border-radius:2px 0 0 2px;"></div>
<div class="t" style="left:1177.00px;top:510.57px;font-size:13.5px;line-height:13.5px;color:#333;letter-spacing:-0.316px;">NOTE:</div>
<div class="t" style="left:1227.00px;top:501.07px;font-size:13.5px;line-height:13.5px;color:#333;letter-spacing:-0.072px;">Agents will use local cache in</div>
<div class="t" style="left:1227.00px;top:519.07px;font-size:13.5px;line-height:13.5px;color:#333;letter-spacing:0.179px;">contributor mode</div>
<div class="r" style="left:1145px;top:555px;width:336px;height:1px;background:#dde2e6;"></div>
<div class="r" style="left:1393px;top:567px;width:72px;height:32px;background:#00cc9a;border-radius:3px;"></div>
<div class="t" style="left:1405.80px;top:575.73px;font-size:14.5px;line-height:14.5px;color:#fff;font-weight:700;letter-spacing:-0.508px;">Submit</div>
<div class="r" style="left:1483px;top:435px;width:282px;height:455px;background:#fff;border-radius:5px;box-shadow:0 1px 3px rgba(0,0,0,0.28),0 0 7px rgba(0,0,0,0.1);"></div>
<div class="r" style="left:1758px;top:438px;width:4px;height:357px;background:#c6cacd;border-radius:2px;"></div>
<div class="t" style="left:1499.00px;top:448.63px;font-size:15.8px;line-height:15.8px;color:#1a1a1a;-webkit-text-stroke:0.35px #1a1a1a;letter-spacing:-0.150px;">DESKTOP-7HAK204</div>
<div class="r" style="left:1483px;top:473px;width:272px;height:2px;background:#dfe3e6;"></div>
<div class="r" style="left:1491px;top:579px;width:256px;height:32px;background:#d5f5ee;border-radius:2px;"></div>
<div class="t" style="left:1499.00px;top:493.00px;font-size:13.7px;line-height:13.7px;color:#222;letter-spacing:-0.289px;">Enabled as Helper</div>
<div class="r" style="left:1722px;top:491px;width:16px;height:16px;background:#1fcf9f;border-radius:2px;"></div>
<svg class="r" style="left:1722px;top:491px" width="16" height="16" viewBox="0 0 16 16" fill="none" stroke="#fff" stroke-width="1.9"><path d="M3.5,8.3 L6.5,11.3 L12.5,4.8"/></svg>
<div class="t" style="left:1499.00px;top:525.00px;font-size:13.7px;line-height:13.7px;color:#222;letter-spacing:-0.159px;">Allow to 'Enable/Disable' as Helper</div>
<div class="r" style="left:1722px;top:523px;width:16px;height:16px;border:2px solid #1fcf9f;border-radius:2px;box-sizing:border-box;"></div>
<div class="t" style="left:1499.00px;top:557.00px;font-size:13.7px;line-height:13.7px;color:#222;letter-spacing:-0.100px;">License Configuration</div>
<svg class="r" style="left:1721px;top:556.5px" width="12" height="14" viewBox="0 0 12 14" fill="none" stroke="#62676b" stroke-width="1.8"><path d="M3.2,1.5 L8.7,7 L3.2,12.5"/></svg>
<div class="t" style="left:1499.00px;top:589.00px;font-size:13.7px;line-height:13.7px;color:#222;letter-spacing:-0.214px;">Enable Build Cache</div>
<svg class="r" style="left:1721px;top:588.5px" width="12" height="14" viewBox="0 0 12 14" fill="none" stroke="#111" stroke-width="1.8"><path d="M3.2,1.5 L8.7,7 L3.2,12.5"/></svg>
<div class="t" style="left:1499.00px;top:621.00px;font-size:13.7px;line-height:13.7px;color:#222;letter-spacing:-0.022px;">Build Cache Configuration</div>
<svg class="r" style="left:1721px;top:620.5px" width="12" height="14" viewBox="0 0 12 14" fill="none" stroke="#62676b" stroke-width="1.8"><path d="M3.2,1.5 L8.7,7 L3.2,12.5"/></svg>
<div class="t" style="left:1499.00px;top:653.00px;font-size:13.7px;line-height:13.7px;color:#222;letter-spacing:-0.088px;">Unsubscribe Agent</div>
<div class="t" style="left:1499.00px;top:702.00px;font-size:13.7px;line-height:13.7px;color:#222;letter-spacing:0.028px;">Agent Description</div>
<svg class="r" style="left:1721px;top:701.5px" width="12" height="14" viewBox="0 0 12 14" fill="none" stroke="#62676b" stroke-width="1.8"><path d="M3.2,1.5 L8.7,7 L3.2,12.5"/></svg>
<div class="t" style="left:1499.00px;top:734.00px;font-size:13.7px;line-height:13.7px;color:#222;letter-spacing:-0.068px;">Build Group</div>
<svg class="r" style="left:1721px;top:733.5px" width="12" height="14" viewBox="0 0 12 14" fill="none" stroke="#62676b" stroke-width="1.8"><path d="M3.2,1.5 L8.7,7 L3.2,12.5"/></svg>
<div class="t" style="left:1499.00px;top:766.00px;font-size:13.7px;line-height:13.7px;color:#222;letter-spacing:-0.078px;">Assignment Priority</div>
<svg class="r" style="left:1721px;top:765.5px" width="12" height="14" viewBox="0 0 12 14" fill="none" stroke="#62676b" stroke-width="1.8"><path d="M3.2,1.5 L8.7,7 L3.2,12.5"/></svg>
<div class="t" style="left:1499.00px;top:798.00px;font-size:13.7px;line-height:13.7px;color:#222;letter-spacing:-0.064px;">Build Priority</div>
<svg class="r" style="left:1721px;top:797.5px" width="12" height="14" viewBox="0 0 12 14" fill="none" stroke="#62676b" stroke-width="1.8"><path d="M3.2,1.5 L8.7,7 L3.2,12.5"/></svg>
<div class="t" style="left:1499.00px;top:830.00px;font-size:13.7px;line-height:13.7px;color:#222;letter-spacing:-0.347px;">Log Level</div>
<svg class="r" style="left:1721px;top:829.5px" width="12" height="14" viewBox="0 0 12 14" fill="none" stroke="#62676b" stroke-width="1.8"><path d="M3.2,1.5 L8.7,7 L3.2,12.5"/></svg>
<div class="t" style="left:1499.00px;top:862.00px;font-size:13.7px;line-height:13.7px;color:#222;letter-spacing:-0.336px;">Resize Helper Cache</div>
<svg class="r" style="left:1721px;top:861.5px" width="12" height="14" viewBox="0 0 12 14" fill="none" stroke="#62676b" stroke-width="1.8"><path d="M3.2,1.5 L8.7,7 L3.2,12.5"/></svg>
<div class="r" style="left:1491px;top:683px;width:256px;height:1px;background:#dde2e6;"></div>
</body></html>
